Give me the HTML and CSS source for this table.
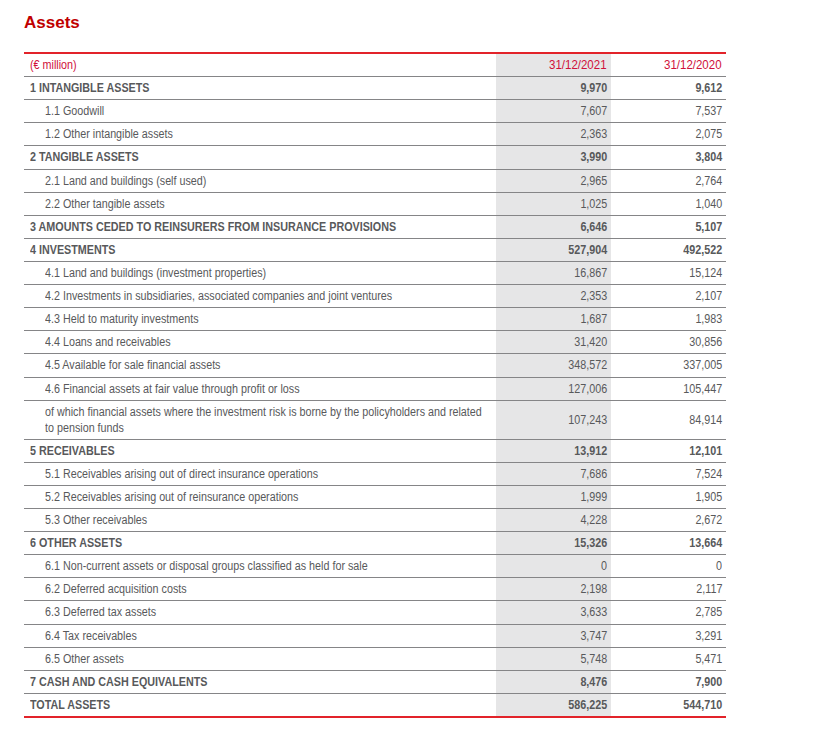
FILE: index.html
```html
<!DOCTYPE html>
<html>
<head>
<meta charset="utf-8">
<link rel="stylesheet" href="styles.css">
</head>
<body>
<h1 class="title">Assets</h1>
<table class="bs">
  <colgroup><col class="c-label"><col class="c-cur"><col class="c-prev"></colgroup>
  <thead>
    <tr class="head"><th class="lbl"><span>(€ million)</span></th><th class="num cur"><span>31/12/2021</span></th><th class="num"><span>31/12/2020</span></th></tr>
  </thead>
  <tbody>
    <tr class="main"><td class="lbl"><span>1 INTANGIBLE ASSETS</span></td><td class="num cur"><span>9,970</span></td><td class="num"><span>9,612</span></td></tr>
    <tr class="sub"><td class="lbl"><span>1.1 Goodwill</span></td><td class="num cur"><span>7,607</span></td><td class="num"><span>7,537</span></td></tr>
    <tr class="sub"><td class="lbl"><span>1.2 Other intangible assets</span></td><td class="num cur"><span>2,363</span></td><td class="num"><span>2,075</span></td></tr>
    <tr class="main"><td class="lbl"><span>2 TANGIBLE ASSETS</span></td><td class="num cur"><span>3,990</span></td><td class="num"><span>3,804</span></td></tr>
    <tr class="sub"><td class="lbl"><span>2.1 Land and buildings (self used)</span></td><td class="num cur"><span>2,965</span></td><td class="num"><span>2,764</span></td></tr>
    <tr class="sub"><td class="lbl"><span>2.2 Other tangible assets</span></td><td class="num cur"><span>1,025</span></td><td class="num"><span>1,040</span></td></tr>
    <tr class="main"><td class="lbl"><span>3 AMOUNTS CEDED TO REINSURERS FROM INSURANCE PROVISIONS</span></td><td class="num cur"><span>6,646</span></td><td class="num"><span>5,107</span></td></tr>
    <tr class="main"><td class="lbl"><span>4 INVESTMENTS</span></td><td class="num cur"><span>527,904</span></td><td class="num"><span>492,522</span></td></tr>
    <tr class="sub"><td class="lbl"><span>4.1 Land and buildings (investment properties)</span></td><td class="num cur"><span>16,867</span></td><td class="num"><span>15,124</span></td></tr>
    <tr class="sub"><td class="lbl"><span>4.2 Investments in subsidiaries, associated companies and joint ventures</span></td><td class="num cur"><span>2,353</span></td><td class="num"><span>2,107</span></td></tr>
    <tr class="sub"><td class="lbl"><span>4.3 Held to maturity investments</span></td><td class="num cur"><span>1,687</span></td><td class="num"><span>1,983</span></td></tr>
    <tr class="sub"><td class="lbl"><span>4.4 Loans and receivables</span></td><td class="num cur"><span>31,420</span></td><td class="num"><span>30,856</span></td></tr>
    <tr class="sub"><td class="lbl"><span>4.5 Available for sale financial assets</span></td><td class="num cur"><span>348,572</span></td><td class="num"><span>337,005</span></td></tr>
    <tr class="sub"><td class="lbl"><span>4.6 Financial assets at fair value through profit or loss</span></td><td class="num cur"><span>127,006</span></td><td class="num"><span>105,447</span></td></tr>
    <tr class="sub tall"><td class="lbl"><span>of which financial assets where the investment risk is borne by the policyholders and related to pension funds</span></td><td class="num cur"><span>107,243</span></td><td class="num"><span>84,914</span></td></tr>
    <tr class="main"><td class="lbl"><span>5 RECEIVABLES</span></td><td class="num cur"><span>13,912</span></td><td class="num"><span>12,101</span></td></tr>
    <tr class="sub"><td class="lbl"><span>5.1 Receivables arising out of direct insurance operations</span></td><td class="num cur"><span>7,686</span></td><td class="num"><span>7,524</span></td></tr>
    <tr class="sub"><td class="lbl"><span>5.2 Receivables arising out of reinsurance operations</span></td><td class="num cur"><span>1,999</span></td><td class="num"><span>1,905</span></td></tr>
    <tr class="sub"><td class="lbl"><span>5.3 Other receivables</span></td><td class="num cur"><span>4,228</span></td><td class="num"><span>2,672</span></td></tr>
    <tr class="main"><td class="lbl"><span>6 OTHER ASSETS</span></td><td class="num cur"><span>15,326</span></td><td class="num"><span>13,664</span></td></tr>
    <tr class="sub"><td class="lbl"><span>6.1 Non-current assets or disposal groups classified as held for sale</span></td><td class="num cur"><span>0</span></td><td class="num"><span>0</span></td></tr>
    <tr class="sub"><td class="lbl"><span>6.2 Deferred acquisition costs</span></td><td class="num cur"><span>2,198</span></td><td class="num"><span>2,117</span></td></tr>
    <tr class="sub"><td class="lbl"><span>6.3 Deferred tax assets</span></td><td class="num cur"><span>3,633</span></td><td class="num"><span>2,785</span></td></tr>
    <tr class="sub"><td class="lbl"><span>6.4 Tax receivables</span></td><td class="num cur"><span>3,747</span></td><td class="num"><span>3,291</span></td></tr>
    <tr class="sub"><td class="lbl"><span>6.5 Other assets</span></td><td class="num cur"><span>5,748</span></td><td class="num"><span>5,471</span></td></tr>
    <tr class="main"><td class="lbl"><span>7 CASH AND CASH EQUIVALENTS</span></td><td class="num cur"><span>8,476</span></td><td class="num"><span>7,900</span></td></tr>
    <tr class="main total"><td class="lbl"><span>TOTAL ASSETS</span></td><td class="num cur"><span>586,225</span></td><td class="num"><span>544,710</span></td></tr>
  </tbody>
</table>
</body>
</html>
```

FILE: styles.css
```css
body {
  margin: 0;
  padding: 14px 24px 0 24px;
  background: #fff;
  font-family: "Liberation Sans", Arial, sans-serif;
  color: #58595b;
}
.title {
  margin: 0;
  font-family: "Liberation Sans", Arial, sans-serif;
  font-size: 17px;
  font-weight: bold;
  color: #c00000;
  line-height: 18px;
}
.bs {
  margin-top: 20px;
  width: 702px;
  border-collapse: collapse;
  table-layout: fixed;
  font-size: 12.5px;
  border-top: 2px solid #e2232a;
}
.c-label { width: 472px; }
.c-cur { width: 115px; }
.c-prev { width: 115px; }
.bs th, .bs td {
  height: 22.12px;
  padding: 0 4px 0 6px;
  border-bottom: 1px solid #858587;
  line-height: 14px;
  vertical-align: middle;
  font-weight: normal;
  white-space: nowrap;
}
.bs td span, .bs th span {
  display: inline-block;
  transform: scaleX(0.86);
  transform-origin: left center;
}
.bs .num span { transform-origin: right center; }
.bs th.num span { transform: scaleX(0.92); }
.bs tr.total td { border-bottom: 2px solid #e2232a; }
.head th { color: #d0103a; text-align: left; }
.head th.num { text-align: right; }
.num { text-align: right; }
.cur { background: #e6e6e7; }
.main td { font-weight: bold; }
.sub td.lbl { padding-left: 21px; }
.tall td { height: 38px; }
.tall td.lbl { white-space: normal; }
.tall td.lbl span { width: 516px; line-height: 16px; }
```
